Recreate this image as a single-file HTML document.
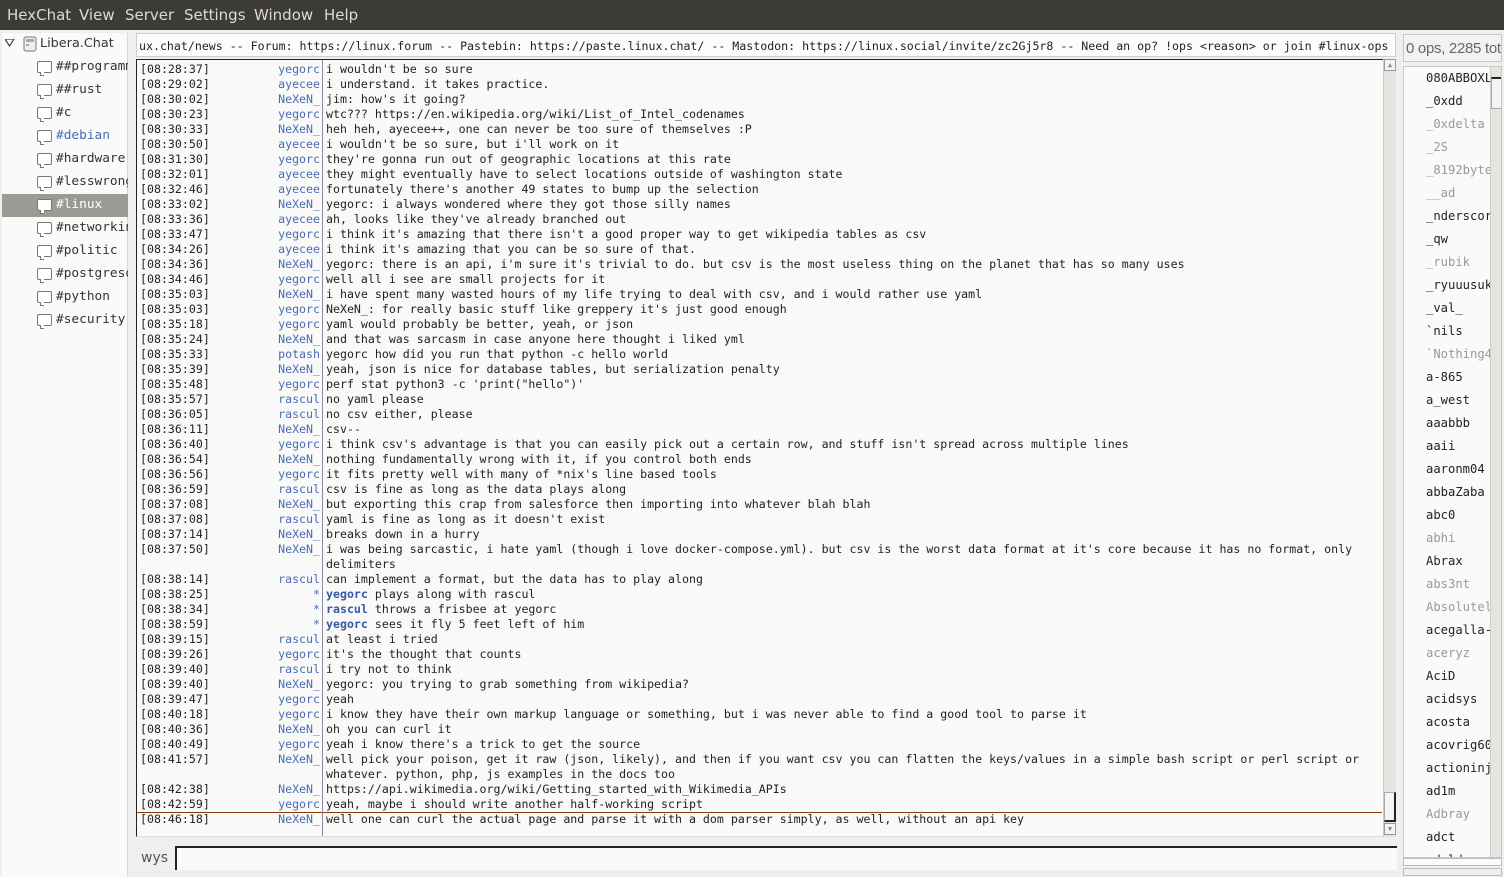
<!DOCTYPE html>
<html><head><meta charset="utf-8"><style>
*{margin:0;padding:0;box-sizing:border-box}
body{width:1504px;height:877px;background:#efefed;position:relative;overflow:hidden;font-family:"DejaVu Sans Mono","Liberation Mono",monospace}
.abs{position:absolute}
#menu{left:0;top:0;width:1504px;height:30px;background:#3c3b37;color:#dfdbd2;font-family:"DejaVu Sans","Liberation Sans",sans-serif;font-size:15px}
#menu span{position:absolute;top:6px}
#tree{left:2px;top:33px;width:126px;height:844px;background:#fafaf8;border-right:1px solid #d8d8d4}
.ch{position:absolute;left:0;width:126px;height:23px;font-family:"DejaVu Sans Mono",monospace;font-size:12.8px;color:#333;white-space:nowrap;overflow:hidden}
.ch .t{position:absolute;left:54px;top:3px}
.ch .ic{position:absolute;left:35px;top:5px;width:15px;height:12px;border:1.3px solid #777;border-radius:2px;background:#fff}
.ch .ic:after{content:"";position:absolute;left:2px;bottom:-4px;width:3px;height:3px;border-left:1.3px solid #777;border-bottom:1.3px solid #777;background:#fff}
#topic{left:136px;top:33px;width:1260px;height:24px;background:#fcfcfb;border:1px solid #cfcfcb;font-size:11.6px;color:#222;white-space:nowrap;overflow:hidden;padding:5px 0 0 2px}
#chat{left:136px;top:59px;width:1247px;height:778px;background:#f9f9f7;border:1px solid #222;border-right:none;border-bottom:1px solid #ddd;overflow:hidden}
#sep{left:322px;top:60px;width:1px;height:776px;background:#8a8aa0}
.ln{position:absolute;left:3px;height:15px;font-size:11.6px;line-height:15px;white-space:pre;color:#222}
.ts{position:absolute;left:0}
.nk{position:absolute;left:40px;width:140px;text-align:right;color:#4a6bb8}
.ms{position:absolute;left:186px}
.ms b{color:#3558a8}
#sb{left:1383px;top:59px;width:13px;height:778px;background:#e4e4e1;border-left:1px solid #ccc}
#ul{left:1403px;top:66px;width:99px;height:792px;background:#fafaf8;border:1px solid #c8c8c4;overflow:hidden}
.u{position:absolute;left:22px;font-size:12.2px;color:#222;white-space:nowrap}
.u.g{color:#999}
</style></head><body>
<div id="menu" class="abs"><span style="left:7px">HexChat</span><span style="left:79px">View</span><span style="left:125px">Server</span><span style="left:184px">Settings</span><span style="left:254px">Window</span><span style="left:324px">Help</span></div>
<div id="tree" class="abs">
<div class="ch" style="top:0"><svg class="abs" style="left:3px;top:6px" width="10" height="8"><path d="M0 0H9L4.5 7Z" fill="none" stroke="#444" stroke-width="1.2"/></svg><svg class="abs" style="left:21px;top:3px" width="14" height="16"><rect x="1" y="1" width="12" height="14" rx="2" fill="#eee" stroke="#777"/><rect x="3" y="3" width="8" height="3" fill="#aaa"/><rect x="3" y="8" width="3" height="2" fill="#aaa"/></svg><span class="t" style="left:38px;font-family:'DejaVu Sans',sans-serif;font-size:12.8px">Libera.Chat</span></div>
<div class="ch" style="top:23px"><i class="ic"></i><span class="t">##programming</span></div>
<div class="ch" style="top:46px"><i class="ic"></i><span class="t">##rust</span></div>
<div class="ch" style="top:69px"><i class="ic"></i><span class="t">#c</span></div>
<div class="ch" style="top:92px"><i class="ic"></i><span class="t" style="color:#4a6bb8">#debian</span></div>
<div class="ch" style="top:115px"><i class="ic"></i><span class="t">#hardware</span></div>
<div class="ch" style="top:138px"><i class="ic"></i><span class="t">#lesswrong</span></div>
<div class="ch" style="top:161px;background:#9b9a94"><i class="ic"></i><span class="t" style="color:#fff">#linux</span></div>
<div class="ch" style="top:184px"><i class="ic"></i><span class="t">#networking</span></div>
<div class="ch" style="top:207px"><i class="ic"></i><span class="t">#politic</span></div>
<div class="ch" style="top:230px"><i class="ic"></i><span class="t">#postgresql</span></div>
<div class="ch" style="top:253px"><i class="ic"></i><span class="t">#python</span></div>
<div class="ch" style="top:276px"><i class="ic"></i><span class="t">#security</span></div>
</div>
<div id="topic" class="abs">ux.chat/news -- Forum: https://linux.forum -- Pastebin: https://paste.linux.chat/ -- Mastodon: https://linux.social/invite/zc2Gj5r8 -- Need an op? !ops &lt;reason&gt; or join #linux-ops</div>
<div id="chat" class="abs">
<div class="ln" style="top:2px"><span class="ts">[08:28:37]</span><span class="nk">yegorc</span><span class="ms">i wouldn't be so sure</span></div>
<div class="ln" style="top:17px"><span class="ts">[08:29:02]</span><span class="nk">ayecee</span><span class="ms">i understand. it takes practice.</span></div>
<div class="ln" style="top:32px"><span class="ts">[08:30:02]</span><span class="nk">NeXeN_</span><span class="ms">jim: how's it going?</span></div>
<div class="ln" style="top:47px"><span class="ts">[08:30:23]</span><span class="nk">yegorc</span><span class="ms">wtc??? https://en.wikipedia.org/wiki/List_of_Intel_codenames</span></div>
<div class="ln" style="top:62px"><span class="ts">[08:30:33]</span><span class="nk">NeXeN_</span><span class="ms">heh heh, ayecee++, one can never be too sure of themselves :P</span></div>
<div class="ln" style="top:77px"><span class="ts">[08:30:50]</span><span class="nk">ayecee</span><span class="ms">i wouldn't be so sure, but i'll work on it</span></div>
<div class="ln" style="top:92px"><span class="ts">[08:31:30]</span><span class="nk">yegorc</span><span class="ms">they're gonna run out of geographic locations at this rate</span></div>
<div class="ln" style="top:107px"><span class="ts">[08:32:01]</span><span class="nk">ayecee</span><span class="ms">they might eventually have to select locations outside of washington state</span></div>
<div class="ln" style="top:122px"><span class="ts">[08:32:46]</span><span class="nk">ayecee</span><span class="ms">fortunately there's another 49 states to bump up the selection</span></div>
<div class="ln" style="top:137px"><span class="ts">[08:33:02]</span><span class="nk">NeXeN_</span><span class="ms">yegorc: i always wondered where they got those silly names</span></div>
<div class="ln" style="top:152px"><span class="ts">[08:33:36]</span><span class="nk">ayecee</span><span class="ms">ah, looks like they've already branched out</span></div>
<div class="ln" style="top:167px"><span class="ts">[08:33:47]</span><span class="nk">yegorc</span><span class="ms">i think it's amazing that there isn't a good proper way to get wikipedia tables as csv</span></div>
<div class="ln" style="top:182px"><span class="ts">[08:34:26]</span><span class="nk">ayecee</span><span class="ms">i think it's amazing that you can be so sure of that.</span></div>
<div class="ln" style="top:197px"><span class="ts">[08:34:36]</span><span class="nk">NeXeN_</span><span class="ms">yegorc: there is an api, i'm sure it's trivial to do. but csv is the most useless thing on the planet that has so many uses</span></div>
<div class="ln" style="top:212px"><span class="ts">[08:34:46]</span><span class="nk">yegorc</span><span class="ms">well all i see are small projects for it</span></div>
<div class="ln" style="top:227px"><span class="ts">[08:35:03]</span><span class="nk">NeXeN_</span><span class="ms">i have spent many wasted hours of my life trying to deal with csv, and i would rather use yaml</span></div>
<div class="ln" style="top:242px"><span class="ts">[08:35:03]</span><span class="nk">yegorc</span><span class="ms">NeXeN_: for really basic stuff like greppery it's just good enough</span></div>
<div class="ln" style="top:257px"><span class="ts">[08:35:18]</span><span class="nk">yegorc</span><span class="ms">yaml would probably be better, yeah, or json</span></div>
<div class="ln" style="top:272px"><span class="ts">[08:35:24]</span><span class="nk">NeXeN_</span><span class="ms">and that was sarcasm in case anyone here thought i liked yml</span></div>
<div class="ln" style="top:287px"><span class="ts">[08:35:33]</span><span class="nk">potash</span><span class="ms">yegorc how did you run that python -c hello world</span></div>
<div class="ln" style="top:302px"><span class="ts">[08:35:39]</span><span class="nk">NeXeN_</span><span class="ms">yeah, json is nice for database tables, but serialization penalty</span></div>
<div class="ln" style="top:317px"><span class="ts">[08:35:48]</span><span class="nk">yegorc</span><span class="ms">perf stat python3 -c 'print("hello")'</span></div>
<div class="ln" style="top:332px"><span class="ts">[08:35:57]</span><span class="nk">rascul</span><span class="ms">no yaml please</span></div>
<div class="ln" style="top:347px"><span class="ts">[08:36:05]</span><span class="nk">rascul</span><span class="ms">no csv either, please</span></div>
<div class="ln" style="top:362px"><span class="ts">[08:36:11]</span><span class="nk">NeXeN_</span><span class="ms">csv--</span></div>
<div class="ln" style="top:377px"><span class="ts">[08:36:40]</span><span class="nk">yegorc</span><span class="ms">i think csv's advantage is that you can easily pick out a certain row, and stuff isn't spread across multiple lines</span></div>
<div class="ln" style="top:392px"><span class="ts">[08:36:54]</span><span class="nk">NeXeN_</span><span class="ms">nothing fundamentally wrong with it, if you control both ends</span></div>
<div class="ln" style="top:407px"><span class="ts">[08:36:56]</span><span class="nk">yegorc</span><span class="ms">it fits pretty well with many of *nix's line based tools</span></div>
<div class="ln" style="top:422px"><span class="ts">[08:36:59]</span><span class="nk">rascul</span><span class="ms">csv is fine as long as the data plays along</span></div>
<div class="ln" style="top:437px"><span class="ts">[08:37:08]</span><span class="nk">NeXeN_</span><span class="ms">but exporting this crap from salesforce then importing into whatever blah blah</span></div>
<div class="ln" style="top:452px"><span class="ts">[08:37:08]</span><span class="nk">rascul</span><span class="ms">yaml is fine as long as it doesn't exist</span></div>
<div class="ln" style="top:467px"><span class="ts">[08:37:14]</span><span class="nk">NeXeN_</span><span class="ms">breaks down in a hurry</span></div>
<div class="ln" style="top:482px"><span class="ts">[08:37:50]</span><span class="nk">NeXeN_</span><span class="ms">i was being sarcastic, i hate yaml (though i love docker-compose.yml). but csv is the worst data format at it's core because it has no format, only</span></div>
<div class="ln" style="top:497px"><span class="ms">delimiters</span></div>
<div class="ln" style="top:512px"><span class="ts">[08:38:14]</span><span class="nk">rascul</span><span class="ms">can implement a format, but the data has to play along</span></div>
<div class="ln" style="top:527px"><span class="ts">[08:38:25]</span><span class="nk">*</span><span class="ms"><b>yegorc</b> plays along with rascul</span></div>
<div class="ln" style="top:542px"><span class="ts">[08:38:34]</span><span class="nk">*</span><span class="ms"><b>rascul</b> throws a frisbee at yegorc</span></div>
<div class="ln" style="top:557px"><span class="ts">[08:38:59]</span><span class="nk">*</span><span class="ms"><b>yegorc</b> sees it fly 5 feet left of him</span></div>
<div class="ln" style="top:572px"><span class="ts">[08:39:15]</span><span class="nk">rascul</span><span class="ms">at least i tried</span></div>
<div class="ln" style="top:587px"><span class="ts">[08:39:26]</span><span class="nk">yegorc</span><span class="ms">it's the thought that counts</span></div>
<div class="ln" style="top:602px"><span class="ts">[08:39:40]</span><span class="nk">rascul</span><span class="ms">i try not to think</span></div>
<div class="ln" style="top:617px"><span class="ts">[08:39:40]</span><span class="nk">NeXeN_</span><span class="ms">yegorc: you trying to grab something from wikipedia?</span></div>
<div class="ln" style="top:632px"><span class="ts">[08:39:47]</span><span class="nk">yegorc</span><span class="ms">yeah</span></div>
<div class="ln" style="top:647px"><span class="ts">[08:40:18]</span><span class="nk">yegorc</span><span class="ms">i know they have their own markup language or something, but i was never able to find a good tool to parse it</span></div>
<div class="ln" style="top:662px"><span class="ts">[08:40:36]</span><span class="nk">NeXeN_</span><span class="ms">oh you can curl it</span></div>
<div class="ln" style="top:677px"><span class="ts">[08:40:49]</span><span class="nk">yegorc</span><span class="ms">yeah i know there's a trick to get the source</span></div>
<div class="ln" style="top:692px"><span class="ts">[08:41:57]</span><span class="nk">NeXeN_</span><span class="ms">well pick your poison, get it raw (json, likely), and then if you want csv you can flatten the keys/values in a simple bash script or perl script or</span></div>
<div class="ln" style="top:707px"><span class="ms">whatever. python, php, js examples in the docs too</span></div>
<div class="ln" style="top:722px"><span class="ts">[08:42:38]</span><span class="nk">NeXeN_</span><span class="ms">https://api.wikimedia.org/wiki/Getting_started_with_Wikimedia_APIs</span></div>
<div class="ln" style="top:737px"><span class="ts">[08:42:59]</span><span class="nk">yegorc</span><span class="ms">yeah, maybe i should write another half-working script</span></div>
<div class="abs" style="left:0;top:752px;width:1245px;height:1px;background:#8b3a0a"></div>
<div class="ln" style="top:752px"><span class="ts">[08:46:18]</span><span class="nk">NeXeN_</span><span class="ms">well one can curl the actual page and parse it with a dom parser simply, as well, without an api key</span></div>
</div>
<div id="sep" class="abs"></div>
<div id="sb" class="abs"><div class="abs" style="left:0;top:0;width:12px;height:12px;background:#f4f4f2;border:1px solid #999;font-size:7px;color:#888;text-align:center;line-height:10px">▲</div><div class="abs" style="left:0;top:733px;width:12px;height:30px;background:#f4f4f2;border:1px solid #aaa;border-right:2px solid #222;border-bottom:2px solid #222"></div><div class="abs" style="left:0;top:764px;width:12px;height:12px;background:#f4f4f2;border:1px solid #999;font-size:7px;color:#888;text-align:center;line-height:10px">▼</div></div>
<div class="abs" style="left:130px;top:840px;width:1268px;height:37px;background:#efefed"></div>
<div class="abs" style="left:141px;top:850px;font-family:'DejaVu Sans',sans-serif;font-size:14px;color:#555">wys</div>
<div class="abs" style="left:175px;top:846px;width:1222px;height:24px;background:#fafaf8;border-top:2px solid #222;border-left:2px solid #222"></div>
<div class="abs" style="left:1403px;top:34px;width:99px;height:28px;border:1px solid #c8c8c4;background:#f2f2f0;font-family:'Liberation Sans',sans-serif;font-size:15px;color:#666;white-space:nowrap;overflow:hidden;padding:5px 0 0 2px;letter-spacing:-0.3px">0 ops, 2285 total</div>
<div id="ul" class="abs">
<div class="u" style="top:4px">080ABBOXL</div><div class="u" style="top:27px">_0xdd</div><div class="u g" style="top:50px">_0xdelta</div><div class="u g" style="top:73px">_2S</div><div class="u g" style="top:96px">_8192byte</div><div class="u g" style="top:119px">__ad</div><div class="u" style="top:142px">_nderscor</div><div class="u" style="top:165px">_qw</div><div class="u g" style="top:188px">_rubik</div><div class="u" style="top:211px">_ryuuusuk</div><div class="u" style="top:234px">_val_</div><div class="u" style="top:257px">`nils</div><div class="u g" style="top:280px">`Nothing4</div><div class="u" style="top:303px">a-865</div><div class="u" style="top:326px">a_west</div><div class="u" style="top:349px">aaabbb</div><div class="u" style="top:372px">aaii</div><div class="u" style="top:395px">aaronm04</div><div class="u" style="top:418px">abbaZaba</div><div class="u" style="top:441px">abc0</div><div class="u g" style="top:464px">abhi</div><div class="u" style="top:487px">Abrax</div><div class="u g" style="top:510px">abs3nt</div><div class="u g" style="top:533px">Absolutel</div><div class="u" style="top:556px">acegalla-</div><div class="u g" style="top:579px">aceryz</div><div class="u" style="top:602px">AciD</div><div class="u" style="top:625px">acidsys</div><div class="u" style="top:648px">acosta</div><div class="u" style="top:671px">acovrig60</div><div class="u" style="top:694px">actioninj</div><div class="u" style="top:717px">ad1m</div><div class="u g" style="top:740px">Adbray</div><div class="u" style="top:763px">adct</div><div class="u" style="top:786px">adeld</div>
<div class="abs" style="left:86px;top:0;width:12px;height:790px;background:#e4e4e1;border-left:1px solid #ccc"><div class="abs" style="left:0;top:10px;width:12px;height:32px;background:#f4f4f2;border:1px solid #aaa;border-right:2px solid #222;border-top:2px solid #222"></div></div>
</div>
<div class="abs" style="left:1403px;top:858px;width:99px;height:8px;background:#fafaf8;border:1px solid #bbb"></div>
<div class="abs" style="left:1403px;top:868px;width:99px;height:8px;border:1px solid #bbb"></div>
</body></html>
